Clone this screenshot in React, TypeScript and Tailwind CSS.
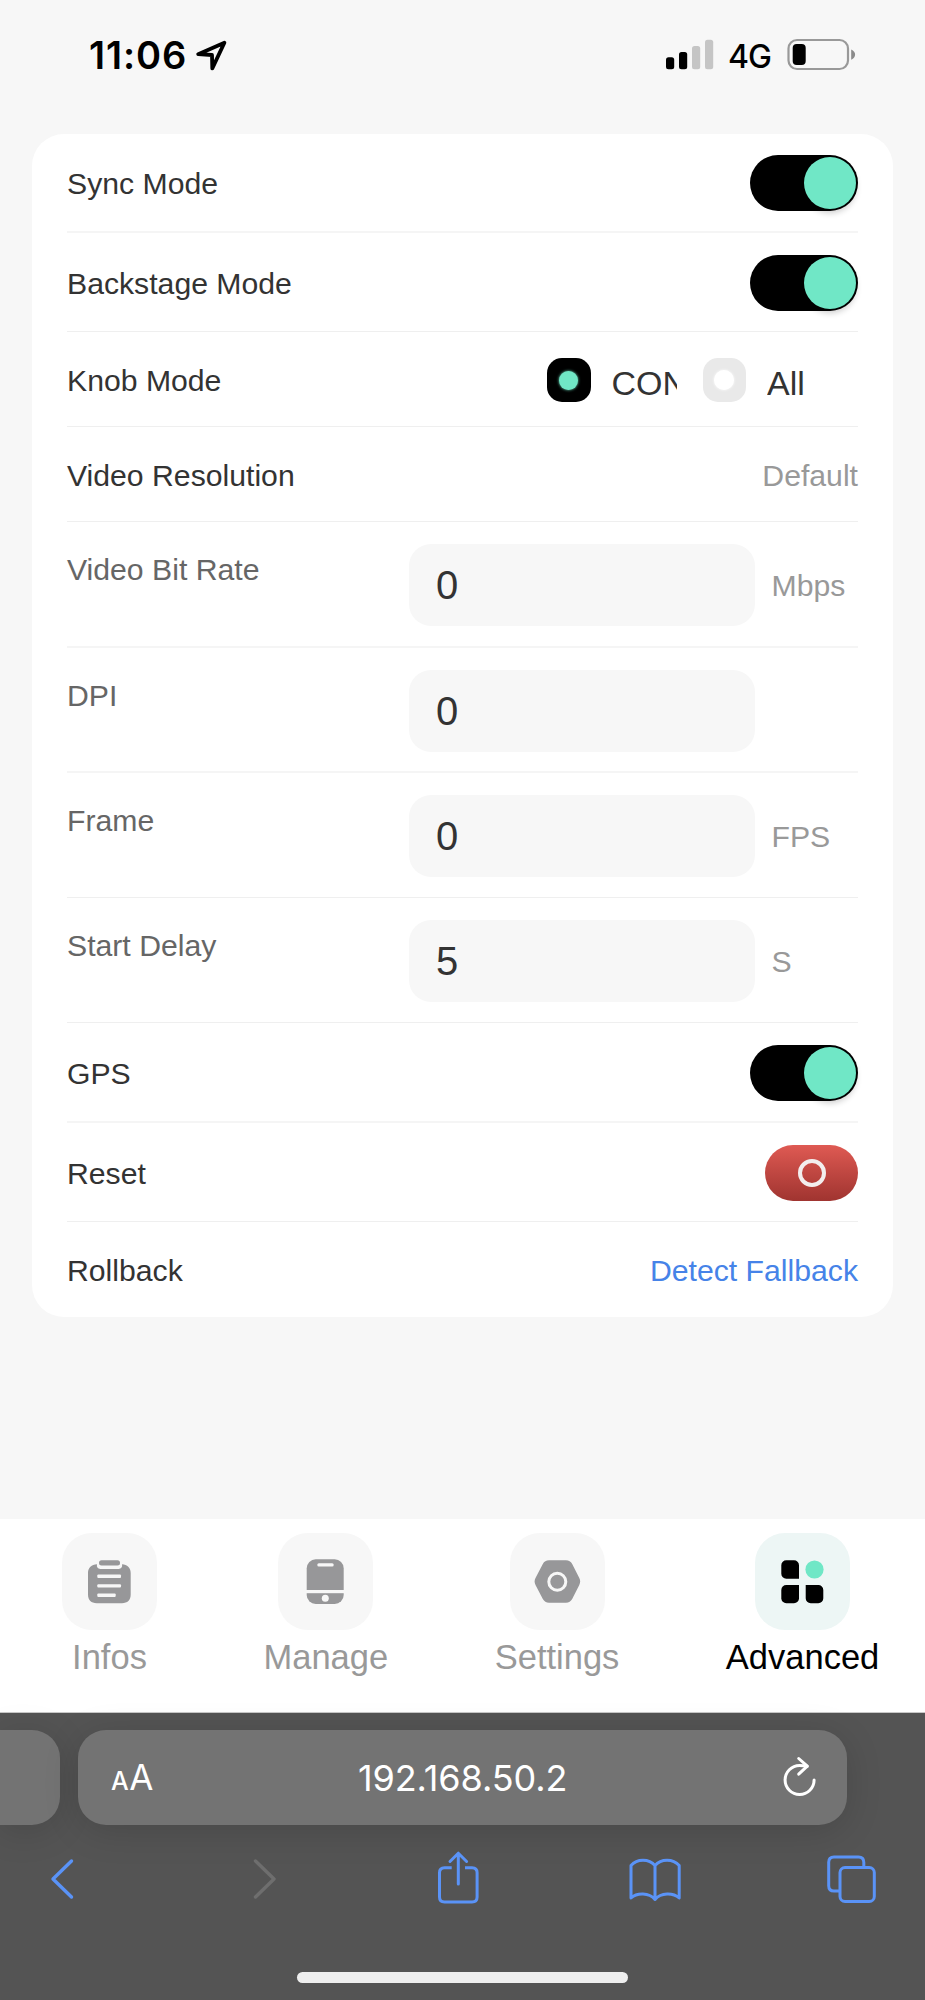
import React, { useState } from 'react';

interface RowProps {
  label: string;
  className: string;
  children?: React.ReactNode;
}

const Row: React.FC<RowProps> = ({ label, className, children }) => (
  <div className={`flex items-center justify-between ${className}`}>
    <span className="pt-0.5 text-[#333]">{label}</span>
    {children}
  </div>
);

const Toggle: React.FC = () => {
  const [on, setOn] = useState(true);
  return (
    <button
      role="switch"
      aria-checked={on}
      onClick={() => setOn(!on)}
      className={`flex h-14 w-[108px] items-center rounded-full p-0.5 ${on ? 'justify-end bg-black' : 'justify-start bg-gray-200'}`}
    >
      <span className="h-[52px] w-[52px] rounded-full bg-[#70e7c6] shadow-[0_4px_6px_rgba(0,0,0,0.2)]" />
    </button>
  );
};

interface RadioProps {
  label: string;
  checked: boolean;
  onSelect: () => void;
}

const Radio: React.FC<RadioProps> = ({ label, checked, onSelect }) => (
  <button onClick={onSelect} className="flex w-[155.5px] items-center">
    <span
      className={`flex h-[43.5px] w-[43.5px] shrink-0 items-center justify-center rounded-[15px] ${checked ? 'bg-black' : 'bg-[#e9e9e9]'}`}
    >
      {checked ? (
        <span className="h-[19px] w-[19px] rounded-full bg-[#70e7c6] shadow-[0_0_3px_#70e7c6]" />
      ) : (
        <span className="h-5 w-5 rounded-full bg-white shadow-[0_0_3px_#fff]" />
      )}
    </span>
    <span className="ml-[21px] mt-[5px] w-[65px] overflow-hidden text-left text-[34px] leading-[40px] whitespace-nowrap text-[#333]">
      {label}
    </span>
  </button>
);

interface FieldProps {
  label: string;
  value: string;
  unit?: string;
  className: string;
}

const Field: React.FC<FieldProps> = ({ label, value, unit, className }) => (
  <div className={`flex items-start ${className}`}>
    <span className="w-[342px] pt-[31px] leading-[34px] text-[#666]">{label}</span>
    <input
      defaultValue={value}
      className="mt-[22px] h-[82px] w-[346px] rounded-[22px] bg-[#f7f7f7] px-[27px] text-[40px] text-[#333] outline-none"
    />
    <span className="ml-[16.5px] pt-[47px] leading-[34px] text-[#999]">{unit}</span>
  </div>
);

const InfosIcon = () => (
  <svg width="95" height="97" viewBox="0 0 95 97">
    <path
      fill="#979799"
      d="M35 31.3c-.6 2.8.6 4.6 3.4 4.6h18.2c2.8 0 4-1.8 3.4-4.6 5.2 0 8.7 3.5 8.7 8.7v21.6c0 5.5-3.3 8.7-8.7 8.7H34.7c-5.4 0-8.7-3.2-8.7-8.7V40c0-5.2 3.5-8.7 9-8.7z"
    />
    <rect x="37" y="27.3" width="21" height="5.2" rx="2.5" fill="#979799" />
    <g fill="#f7f7f7">
      <rect x="35.3" y="41.6" width="23.7" height="3.4" rx="1" />
      <rect x="35.3" y="51.2" width="23.7" height="3.4" rx="1" />
      <rect x="35.3" y="60.6" width="18.4" height="3.4" rx="1" />
    </g>
  </svg>
);

const ManageIcon = () => (
  <svg width="95" height="97" viewBox="0 0 95 97">
    <rect x="28.7" y="26.3" width="37" height="44.7" rx="9" fill="#979799" />
    <rect x="28" y="57" width="39" height="3.2" fill="#f7f7f7" />
    <rect x="39.3" y="30.3" width="16.4" height="3.1" rx="1.5" fill="#f7f7f7" />
    <circle cx="47.3" cy="65.3" r="3.5" fill="#f7f7f7" />
  </svg>
);

const SettingsIcon = () => (
  <svg width="95" height="97" viewBox="0 0 95 97">
    <path
      fill="#979799"
      d="M39 27.3h17c2.8 0 4.8 1.2 6.2 3.6l7.1 14.2c1.2 2.4 1.2 4.4 0 6.8l-7.1 14.2c-1.4 2.4-3.4 3.6-6.2 3.6H39c-2.8 0-4.8-1.2-6.2-3.6l-7.3-14.2c-1.2-2.4-1.2-4.4 0-6.8l7.3-14.2c1.4-2.4 3.4-3.6 6.2-3.6z"
    />
    <circle cx="47.3" cy="48.7" r="8.5" fill="none" stroke="#f7f7f7" strokeWidth="3" />
  </svg>
);

const AdvancedIcon = () => (
  <svg width="95" height="97" viewBox="0 0 95 97">
    <path d="M31.3 27.3H39a5 5 0 0 1 5 5v13.4H31.3a5 5 0 0 1-5-5v-8.4a5 5 0 0 1 5-5z" />
    <path d="M31.3 52H44v13.3a5 5 0 0 1-5 5h-7.7a5 5 0 0 1-5-5V57a5 5 0 0 1 5-5z" />
    <path d="M50.7 52h12.6a5 5 0 0 1 5 5v8.3a5 5 0 0 1-5 5h-7.6a5 5 0 0 1-5-5z" />
    <circle cx="59.5" cy="36.5" r="9.1" fill="#70e7c6" />
  </svg>
);

const tabs = [
  { name: 'Infos', icon: InfosIcon },
  { name: 'Manage', icon: ManageIcon },
  { name: 'Settings', icon: SettingsIcon },
  { name: 'Advanced', icon: AdvancedIcon },
];

const StatusBar = () => (
  <header className="flex h-[134px] items-start font-[Inter,sans-serif] text-black">
    <span className="ml-[89px] mt-[32px] w-[98px] text-[38px] leading-[46px] font-semibold tracking-[0.9px] whitespace-nowrap">
      11:06
    </span>
    <svg className="ml-[7px] mt-[38px]" width="36" height="34" viewBox="194 38 36 34" fill="none">
      <path d="M224.4 42.7 198.2 54.2 212 55 212.3 68.4z" stroke="#000" strokeWidth="3.8" strokeLinejoin="round" />
    </svg>
    <svg className="ml-[434px] mt-[38px]" width="52" height="34" viewBox="664 38 52 34">
      <rect x="666" y="57.3" width="8.2" height="12" rx="2.5" />
      <rect x="679" y="52" width="8.2" height="17.3" rx="2.5" />
      <rect x="692" y="46" width="8.2" height="23.3" rx="2.5" fill="#c5c5c5" />
      <rect x="705" y="39.7" width="8.2" height="29.6" rx="2.5" fill="#c5c5c5" />
    </svg>
    <span className="ml-[12px] mt-[37px] w-[46px] text-[32px] leading-[39px] font-medium tracking-[-1px]">4G</span>
    <svg className="ml-[12px] mt-[36px]" width="72" height="36" viewBox="786 36 72 36">
      <rect x="788.5" y="40" width="59.5" height="29" rx="8.5" fill="none" stroke="#999" strokeWidth="2.2" />
      <rect x="792.7" y="44" width="13" height="21" rx="4" />
      <path d="M851.2 49.5c5.2 2 5.2 8.2 0 10.2z" fill="#8b8b8b" />
    </svg>
  </header>
);

const BrowserBar = () => (
  <footer className="relative flex h-[288px] flex-col border-t border-[#c8c8c8] bg-[#545454]">
    <div className="mt-[17px] flex h-[95px] gap-[18px]">
      <div className="w-[60px] rounded-r-[28px] bg-[#737373] shadow-[0_6px_36px_rgba(0,0,0,0.14)]" />
      <div className="flex w-[769px] items-center rounded-[28px] bg-[#737373] font-[Inter,sans-serif] text-white shadow-[0_6px_36px_rgba(0,0,0,0.14)]">
        <div className="ml-[33px] flex w-[46px] items-baseline">
          <span className="text-[25px] font-medium tracking-[-0.5px]">A</span>
          <span className="ml-[1px] text-[35px]">A</span>
        </div>
        <span className="ml-[201px] w-[211px] text-[36px] tracking-[-0.1px] whitespace-nowrap">192.168.50.2</span>
        <svg className="ml-[211px]" width="38" height="48" viewBox="780 1753.5 38 48" fill="none" stroke="#fff" strokeWidth="3" strokeLinecap="round" strokeLinejoin="round">
          <path d="M814.1 1779.5a14.5 14.5 0 1 1-14.5-14.5q4 0 7.5.8" />
          <path d="M798.7 1758l8.6 7.7-8.6 8" />
        </svg>
      </div>
    </div>
    <div className="mt-[22px] flex h-[64px] items-start" aria-label="toolbar">
      <svg className="ml-[48px]" width="28" height="64" viewBox="48 1847 28 64" fill="none" stroke="#5a93f7" strokeWidth="3.4" strokeLinecap="round" strokeLinejoin="round">
        <path d="m71.5 1861-18.5 18 18.5 18" />
      </svg>
      <svg className="ml-[175px]" width="28" height="64" viewBox="251 1847 28 64" fill="none" stroke="#6e6e6e" strokeWidth="3.4" strokeLinecap="round" strokeLinejoin="round">
        <path d="m255.5 1861 18.5 18-18.5 18" />
      </svg>
      <svg className="ml-[156px]" width="47" height="64" viewBox="435 1847 47 64" fill="none" stroke="#5a93f7" strokeWidth="3" strokeLinecap="round" strokeLinejoin="round">
        <path strokeLinecap="butt" d="M451.7 1867.8h-7.2q-5 0-5 5V1897q0 5 5 5h27.6q5 0 5-5v-24.2q0-5-5-5H465" />
        <path d="M458.3 1884v-30M450 1861.5l8.3-8.3 8.3 8.3" />
      </svg>
      <svg className="ml-[144px]" width="58" height="64" viewBox="626 1847 58 64" fill="none" stroke="#5a93f7" strokeWidth="3" strokeLinecap="round" strokeLinejoin="round">
        <path d="M655 1865.5c-6-7-18-7-24 0v32.5c6-5.5 18-5.5 24 1.5 6-7 18-7 24.2-1.5v-32.5c-6.2-7-18.2-7-24.2 0zv34" />
      </svg>
      <svg className="ml-[140px]" width="56" height="64" viewBox="824 1847 56 64" fill="none" stroke="#5a93f7" strokeWidth="3" strokeLinejoin="round">
        <rect x="840" y="1867.5" width="34.3" height="34" rx="5" />
        <path d="M840 1891h-6q-5.3 0-5.3-5.3v-23.4q0-5.3 5.3-5.3h24.5q5.3 0 5.3 5.3v5.2" />
      </svg>
    </div>
    <div className="mt-[61px] ml-[297px] h-[11px] w-[331px] rounded-full bg-[#eee]" />
  </footer>
);

const App: React.FC = () => {
  const [knob, setKnob] = useState('CON');
  const [activeTab, setActiveTab] = useState('Advanced');

  return (
    <div className="flex h-[2000px] w-[925px] flex-col overflow-hidden bg-[#f7f7f7] font-['Liberation_Sans',Arial,sans-serif] text-[30.2px]">
      <StatusBar />

      <main className="flex-1">
        <section className="mx-8 rounded-[32px] bg-white pr-[35px] pl-[35px]">
          <Row label="Sync Mode" className="h-[99px] border-b-2 border-[#f5f5f5] pt-[1px]">
            <Toggle />
          </Row>
          <Row label="Backstage Mode" className="h-[99px] border-b border-[#efefef] pt-[1px]">
            <Toggle />
          </Row>
          <Row label="Knob Mode" className="h-[95px] border-b border-[#efefef] pt-[2px]">
            <div className="flex">
              <Radio label="CON" checked={knob === 'CON'} onSelect={() => setKnob('CON')} />
              <Radio label="All" checked={knob === 'All'} onSelect={() => setKnob('All')} />
            </div>
          </Row>
          <Row label="Video Resolution" className="h-[95px] border-b border-[#efefef] pt-[2px]">
            <span className="pt-0.5 text-[#999]">Default</span>
          </Row>
          <Field label="Video Bit Rate" value="0" unit="Mbps" className="h-[126px] border-b-2 border-[#f5f5f5]" />
          <Field label="DPI" value="0" className="h-[125px] border-b-2 border-[#f5f5f5]" />
          <Field label="Frame" value="0" unit="FPS" className="h-[125px] border-b border-[#efefef]" />
          <Field label="Start Delay" value="5" unit="S" className="h-[125px] border-b border-[#efefef]" />
          <Row label="GPS" className="h-[100px] border-b-2 border-[#f5f5f5] pt-[2px]">
            <Toggle />
          </Row>
          <Row label="Reset" className="h-[99px] border-b border-[#efefef] pt-[1px]">
            <button
              aria-label="Reset"
              className="flex h-14 w-[93px] items-center justify-center rounded-full bg-linear-to-b from-[#df5a53] to-[#a03430]"
            >
              <span className="h-7 w-7 rounded-full border-4 border-[#f3eeee]" />
            </button>
          </Row>
          <Row label="Rollback" className="h-[95px]">
            <a className="pt-0.5 text-[#4683e8]">Detect Fallback</a>
          </Row>
        </section>
      </main>

      <nav className="flex h-[193px] items-start gap-[106.5px] bg-white pt-[14px] pl-[62px]">
        {tabs.map((tab) => {
          const Icon = tab.icon;
          const active = tab.name === activeTab;
          return (
            <button key={tab.name} onClick={() => setActiveTab(tab.name)} className="flex flex-col items-center">
              <span className={`h-[97px] w-[95px] overflow-hidden rounded-[30px] ${active ? 'bg-[#edf6f5]' : 'bg-[#f7f7f7]'}`}>
                <Icon />
              </span>
              <span className={`mt-[7px] text-[34.5px] leading-10 ${active ? 'text-black' : 'text-[#999]'}`}>{tab.name}</span>
            </button>
          );
        })}
      </nav>

      <BrowserBar />
    </div>
  );
};

export default App;
